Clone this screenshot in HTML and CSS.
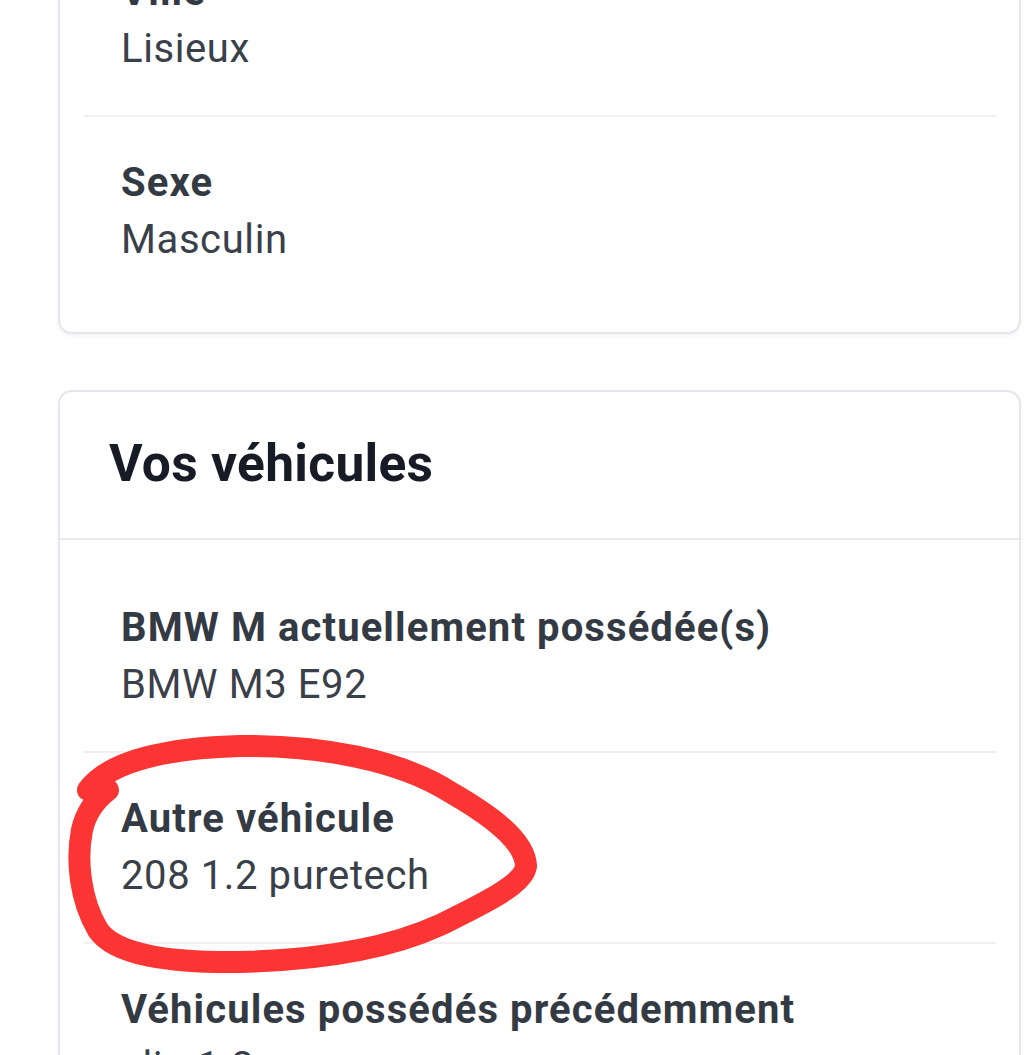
FILE: index.html
```html
<!DOCTYPE html>
<html lang="fr">
<head>
<meta charset="utf-8">
<title>Profil</title>
<link rel="stylesheet" href="styles.css">
</head>
<body>
<main class="page">
  <section class="card">
    <dl class="card-body">
      <div class="item">
        <dt class="label">Ville</dt>
        <dd class="value">Lisieux</dd>
      </div>
      <div class="item">
        <dt class="label">Sexe</dt>
        <dd class="value">Masculin</dd>
      </div>
    </dl>
  </section>

  <section class="card">
    <header class="card-header">
      <h2 class="card-title">Vos véhicules</h2>
    </header>
    <dl class="card-body">
      <div class="item">
        <dt class="label">BMW M actuellement possédée(s)</dt>
        <dd class="value">BMW M3 E92</dd>
      </div>
      <div class="item">
        <dt class="label">Autre véhicule</dt>
        <dd class="value">208 1.2 puretech</dd>
      </div>
      <div class="item">
        <dt class="label">Véhicules possédés précédemment</dt>
        <dd class="value">clio 1.2</dd>
      </div>
    </dl>
  </section>
</main>

<svg class="annotation" width="1036" height="1055" viewBox="0 0 1036 1055" aria-hidden="true">
  <path d="M 88 790 C 110 760, 170 748, 240 746 C 320 745, 400 760, 450 792 C 490 815, 525 840, 526 866 C 524 885, 480 905, 440 925 C 390 948, 320 960, 240 962 C 170 963, 115 955, 98 930 C 80 900, 76 860, 82 830 C 86 812, 95 800, 108 790" />
</svg>
</body>
</html>
```

FILE: styles.css
```css
html, body {
  margin: 0;
  padding: 0;
  background: #ffffff;
  overflow: hidden;
}

body {
  font-family: Roboto, "Liberation Sans", sans-serif;
  color: #374151;
}

.page {
  display: flex;
  flex-direction: column;
  gap: 56px;
  margin: -98px 15px 0 58px;
}

.card {
  border: 2px solid #e3e6ec;
  border-radius: 14px;
  background: #ffffff;
  box-shadow: 0 2px 4px rgba(17, 24, 39, 0.05);
}

.card-header {
  padding: 32px 49px 34px;
  border-bottom: 2px solid #e8eaee;
}

.card-title {
  margin: 0;
  font-size: 51.5px;
  line-height: 80px;
  font-weight: 700;
  letter-spacing: 0.3px;
  color: #161b26;
}

.card-body {
  margin: 0;
  padding: 22px 23px 26px 24px;
}

.item {
  padding: 37px 37px 38px;
  border-top: 2px solid #eff0f2;
}

.item:first-child {
  border-top: none;
}

.label {
  margin: 0;
  font-size: 40px;
  line-height: 57px;
  font-weight: 700;
  letter-spacing: 1.1px;
  color: #343a43;
}

.value {
  margin: 0;
  font-size: 40px;
  line-height: 57px;
  font-weight: 400;
  letter-spacing: 0.6px;
  color: #3a4049;
}

.annotation {
  position: absolute;
  top: 0;
  left: 0;
  pointer-events: none;
}

.annotation path {
  fill: none;
  stroke: #fb3434;
  stroke-width: 22;
  stroke-linecap: round;
  stroke-linejoin: round;
}
```
